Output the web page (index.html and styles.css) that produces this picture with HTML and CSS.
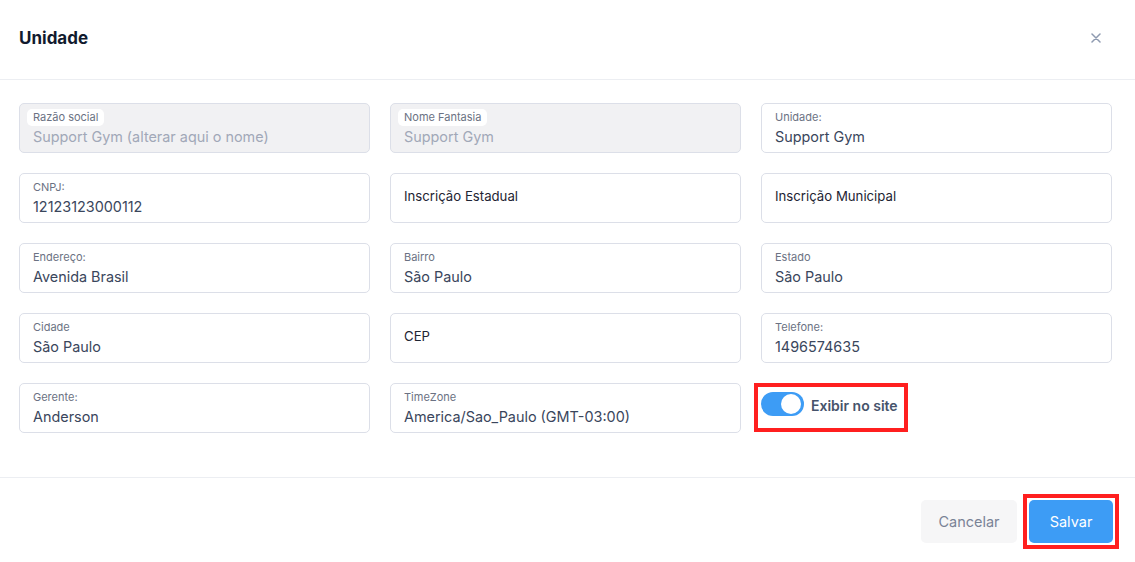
FILE: index.html
```html
<!DOCTYPE html>
<html lang="pt-BR">
<head>
  <meta charset="UTF-8">
  <meta name="viewport" content="width=device-width, initial-scale=1.0">
  <title>Unidade</title>
  <link rel="stylesheet" href="styles.css">
</head>
<body>
  <div class="modal">
    <div class="modal-header">
      <h2>Unidade</h2>
      <button class="close" aria-label="Fechar">
        <svg width="10" height="10" viewBox="0 0 10 10"><path d="M1 1L9 9M9 1L1 9" stroke="#8e9ab0" stroke-width="1.5" stroke-linecap="round"/></svg>
      </button>
    </div>
    <div class="modal-body">
      <div class="field disabled"><label>Razão social</label><div class="value">Support Gym (alterar aqui o nome)</div></div>
      <div class="field disabled"><label>Nome Fantasia</label><div class="value">Support Gym</div></div>
      <div class="field"><label>Unidade:</label><div class="value">Support Gym</div></div>

      <div class="field"><label>CNPJ:</label><div class="value">12123123000112</div></div>
      <div class="field empty"><div class="placeholder">Inscrição Estadual</div></div>
      <div class="field empty"><div class="placeholder">Inscrição Municipal</div></div>

      <div class="field"><label>Endereço:</label><div class="value">Avenida Brasil</div></div>
      <div class="field"><label>Bairro</label><div class="value">São Paulo</div></div>
      <div class="field"><label>Estado</label><div class="value">São Paulo</div></div>

      <div class="field"><label>Cidade</label><div class="value">São Paulo</div></div>
      <div class="field empty"><div class="placeholder">CEP</div></div>
      <div class="field"><label>Telefone:</label><div class="value">1496574635</div></div>

      <div class="field"><label>Gerente:</label><div class="value">Anderson</div></div>
      <div class="field"><label>TimeZone</label><div class="value">America/Sao_Paulo (GMT-03:00)</div></div>
      <div class="toggle-cell">
        <div class="toggle-wrap highlight">
          <span class="switch on"><span class="knob"></span></span>
          <span class="toggle-label">Exibir no site</span>
        </div>
      </div>
    </div>
    <div class="modal-footer">
      <button class="btn btn-cancel">Cancelar</button>
      <span class="highlight-btn"><button class="btn btn-save">Salvar</button></span>
    </div>
  </div>
</body>
</html>
```

FILE: styles.css
```css
*{
  box-sizing: border-box;
}
body{
  margin: 0;
  font-family: Inter, "Noto Sans", "Liberation Sans", sans-serif;
  background: #fff;
  color: #334155;
}
.modal{
  width: 1135px;
}
.modal-header{
  height: 80px;
  padding: 0 34px 0 19px;
  display: flex;
  align-items: center;
  justify-content: space-between;
  border-bottom: 1px solid #eceef2;
}
.modal-header h2{
  margin: 0;
  font-size: 17px;
  font-weight: 700;
  color: #111a2e;
  padding-bottom: 3px;
}
.close{
  border: none;
  background: none;
  padding: 0;
  width: 10px;
  height: 10px;
  margin-bottom: 3px;
  display: flex;
  align-items: center;
  justify-content: center;
  cursor: pointer;
}
.modal-body{
  padding: 23px 23px 44px 19px;
  display: grid;
  grid-template-columns: repeat(3, 1fr);
  column-gap: 20px;
  row-gap: 20px;
  border-bottom: 1px solid #eceef2;
}
.field{
  height: 50px;
  border: 1px solid #dcdfe8;
  border-radius: 5px;
  padding: 6px 13px 0;
  display: flex;
  flex-direction: column;
}
.field label{
  font-size: 11px;
  color: #6b7283;
  line-height: 15px;
  align-self: flex-start;
}
.field .value{
  font-size: 14.4px;
  color: #3a465c;
  line-height: 22px;
  margin-top: 1px;
}
.field.disabled{
  background: #f1f1f3;
}
.field.disabled label{
  background: #fff;
  border-radius: 5px;
  padding: 1px 6px;
  margin-left: -6px;
  margin-top: -1px;
  line-height: 15px;
}
.field.disabled .value{
  color: #a1a8b8;
  margin-top: 0;
}
.field.empty{
  justify-content: center;
  padding: 0 13px 5px;
}
.placeholder{
  font-size: 13.2px;
  color: #1e2433;
}
.toggle-cell{
  display: flex;
  align-items: center;
}
.toggle-wrap{
  display: flex;
  align-items: flex-start;
  gap: 7px;
  padding: 5px 6px 10px 3px;
  margin-top: -2px;
}
.highlight{
  outline: 4px solid #ff1f1f;
  outline-offset: 0;
  margin-left: -3px;
}
.switch{
  width: 43px;
  height: 24px;
  border-radius: 12px;
  background: #3d9cf5;
  position: relative;
  display: inline-block;
  flex-shrink: 0;
}
.switch .knob{
  position: absolute;
  right: 3px;
  top: 2px;
  width: 20px;
  height: 20px;
  border-radius: 50%;
  background: #fff;
}
.toggle-label{
  font-size: 14px;
  font-weight: 600;
  color: #46536b;
  line-height: 24px;
  margin-top: 2px;
}
.modal-footer{
  display: flex;
  justify-content: flex-end;
  align-items: center;
  gap: 6px;
  padding: 16px 16px 13px 0;
}
.btn{
  height: 43px;
  border: none;
  border-radius: 5px;
  font-family: inherit;
  font-size: 14.5px;
  padding: 0 20px;
  cursor: pointer;
}
.btn-cancel{
  background: #f6f6f7;
  color: #7a8396;
  width: 96px;
  padding: 0;
}
.btn-save{
  background: #3d9cf5;
  color: #fff;
  width: 84px;
  padding: 0;
  display: block;
}
.highlight-btn{
  display: block;
  border: 4px solid #ff1f1f;
  padding: 2px;
}
```
